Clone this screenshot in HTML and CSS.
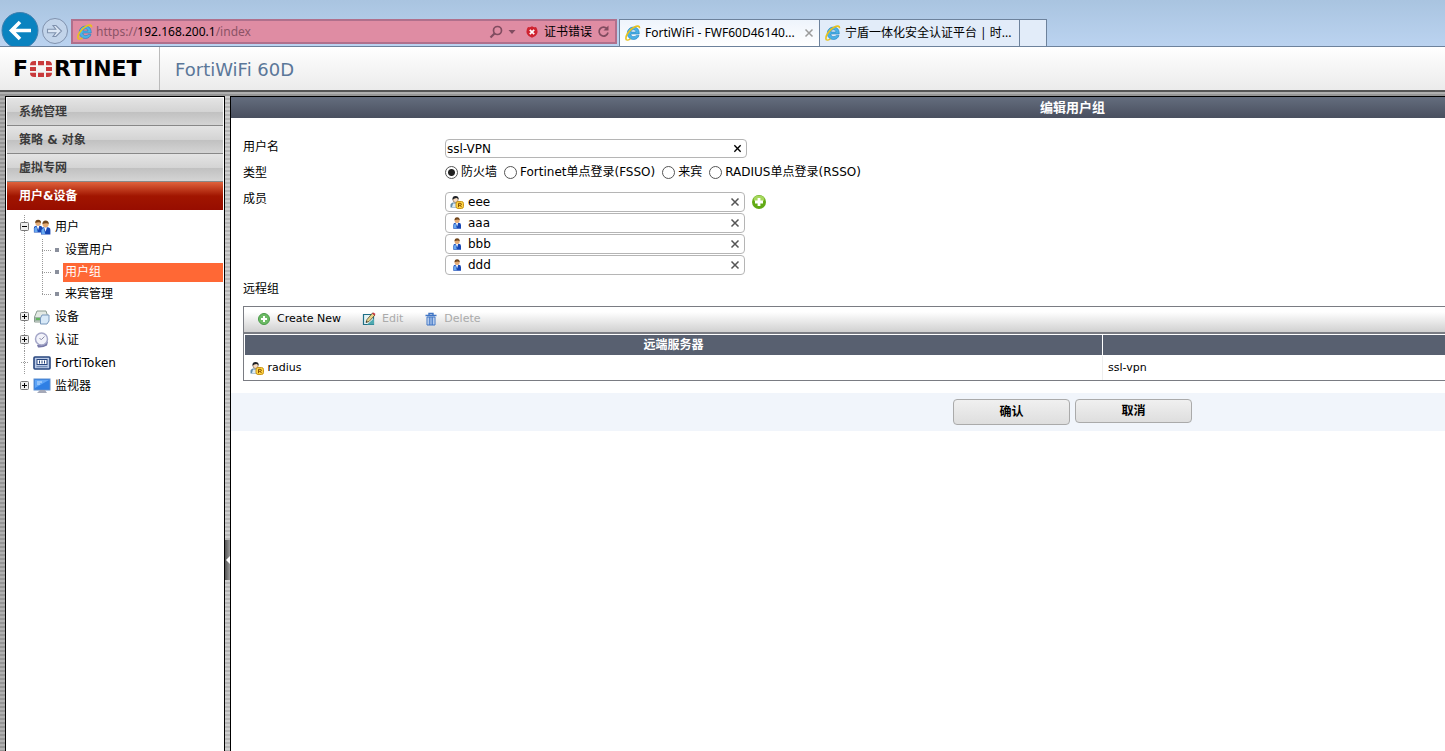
FILE: index.html
```html
<!DOCTYPE html>
<html lang="zh-CN">
<head>
  <meta charset="UTF-8" />
  <meta name="viewport" content="width=device-width, initial-scale=1" />
  <title>FortiWiFi - FWF60D46140</title>
  <link rel="stylesheet" href="styles.css">
</head>
<body>
  <!-- shared icons -->
  <svg class="defs" width="0" height="0" aria-hidden="true">
    <symbol id="ie" viewBox="0 0 16 16">
      <path d="M14.200 9H5.800c.1 1.700 1.300 2.600 2.900 2.600 1.200 0 2-.4 2.500-1.200H14c-.8 2.500-2.700 4.100-5.500 4.100-3.700 0-6.200-2.500-6.200-6.200 0-3.600 2.600-6.200 6.200-6.200 3.600 0 6 2.600 5.700 6.900zM5.900 7h5.100c-.2-1.400-1.200-2.200-2.500-2.200S6.200 5.600 5.900 7z" fill="#4bb1e6" stroke="#1f7fc0" stroke-width=".6"/>
      <path d="M1.500 15C-.6 12.300 3.800 4.800 9.500 2c2.800-1.400 5.200-1.300 5 1.200" fill="none" stroke="#e8c21c" stroke-width="1.600"/>
      <path d="M1.500 15c1.200.4 2.700-.3 4-1.300" fill="none" stroke="#e8c21c" stroke-width="1.400"/>
    </symbol>
    <symbol id="person" viewBox="0 0 9 12">
      <path d="M.8 11.800V8q0-2.300 2.200-2.300h3Q8.500 5.700 8.500 8v3.800z" fill="#1746b4"/>
      <path d="M1.200 11.300V8l1.800-2 1.300 5.300z" fill="#69a9f0"/>
      <path d="M3.300 5.800h2.400L4.600 9.500z" fill="#fff"/>
      <circle cx="4.600" cy="3.400" r="2.500" fill="#e6ac74"/>
      <path d="M2 3.200Q2 .3 4.600.3t2.600 2.900Q5.500 1.900 2 3.200z" fill="#70451c"/>
    </symbol>
    <symbol id="radius-user" viewBox="0 0 14 14">
      <path d="M.5 12.500V10q0-2 3-2.500h3q3 .5 3 2.500v2.500z" fill="#5f8aa8"/>
      <path d="M2 12l1-3.500h3L6.500 12z" fill="#dbeaf2"/>
      <circle cx="5.500" cy="4.800" r="2.600" fill="#f7dcc0" stroke="#5b4936" stroke-width=".5"/>
      <path d="M2.500 4.800Q2 1 5.500 1t3.200 3.800Q8 3 6.500 3T2.500 4.800z" fill="#1f2126"/>
      <rect x="6" y="6.500" width="7.500" height="7" rx="2" fill="#ffd545" stroke="#c58c0a" stroke-width=".9"/>
      <path d="M8.500 12.200V8.300h1.700q1.200 0 1.200 1t-1.200 1H8.600m1.500 0l1.500 1.900" fill="none" stroke="#8b5200" stroke-width="1"/>
    </symbol>
    <symbol id="cross" viewBox="0 0 10 10">
      <path d="M1.500 1.500l7 7m0-7l-7 7" fill="none" stroke="currentColor" stroke-width="1.500"/>
    </symbol>
  </svg>

  <div class="browser">
    <button class="back" aria-label="后退">
      <svg width="38" height="34" viewBox="0 0 38 34"><circle cx="19" cy="18.500" r="18" fill="#0a83c0" stroke="#3f7fae"/><path d="M30 18.500H12M19 10l-8.500 8.500L19 27" fill="none" stroke="#fff" stroke-width="3.600"/></svg>
    </button>
    <button class="forward" aria-label="前进">
      <svg width="18" height="14" viewBox="0 0 18 14"><path d="M1.500 5.200h8.300L7 1.500h3L15.500 7 10 12.500H7l2.800-3.700H1.500z" fill="#dce7f5" stroke="#8092ae" stroke-width="1.100"/></svg>
    </button>
    <div class="address">
      <svg width="16" height="16"><use href="#ie"/></svg>
      <span class="url">https://<b>192.168.200.1</b>/index</span>
      <svg class="search" width="14" height="14" viewBox="0 0 14 14"><circle cx="8.500" cy="5.500" r="4" fill="none" stroke="#814c60" stroke-width="1.700"/><path d="M5.500 8.500L1.500 12.500" stroke="#814c60" stroke-width="2.200"/></svg>
      <svg class="caret" width="8" height="4" viewBox="0 0 8 4"><path d="M.5 0h7L4 4z" fill="#814c60"/></svg>
      <svg class="bad" width="12" height="12" viewBox="0 0 12 12"><path d="M2 1Q4 1.500 6 .3q2 1.200 4 .7 2.500 3.500 1 7-1.500 3-5 3.800Q2.500 11 1 8-.5 4.500 2 1z" fill="#cf2330"/><path d="M3.800 3.800l4.400 4.400m0-4.400L3.800 8.200" stroke="#fff" stroke-width="1.700"/></svg>
      <span class="cert">证书错误</span>
      <svg width="13" height="13" viewBox="0 0 13 13"><path d="M10.300 4A4.500 4.500 0 1 0 11 7.500" fill="none" stroke="#814c60" stroke-width="1.700"/><path d="M11.500.5v5h-5z" fill="#814c60"/></svg>
    </div>
    <div class="tab active">
      <svg width="16" height="16"><use href="#ie"/></svg>
      <span>FortiWiFi - FWF60D46140...</span>
      <svg class="close" width="10" height="10"><use href="#cross"/></svg>
    </div>
    <div class="tab">
      <svg width="16" height="16"><use href="#ie"/></svg>
      <span>宁盾一体化安全认证平台 | 时...</span>
    </div>
    <div class="tab new"></div>
  </div>

  <header class="header">
    <div class="logo">
      <span>F</span>
      <svg width="22" height="16" viewBox="0 0 22 16" aria-label="O">
        <g fill="#c93a3c">
          <path d="M0 4.300Q0 0 4.300 0H6v4.300zM8 0h6v4.300H8zM16 0h1.700Q22 0 22 4.300h-6z"/>
          <path d="M0 6h6v4H0zM16 6h6v4h-6z"/>
          <path d="M0 11.700h6V16H4.300Q0 16 0 11.700zM8 11.700h6V16H8zM16 11.700h6q0 4.300-4.300 4.300H16z"/>
        </g>
      </svg>
      <span>RTINET</span>
    </div>
    <h1>FortiWiFi 60D</h1>
  </header>

  <div class="workspace">
    <nav class="sidebar">
      <a class="section" href="#">系统管理</a>
      <a class="section" href="#">策略 &amp; 对象</a>
      <a class="section" href="#">虚拟专网</a>
      <a class="section current" href="#">用户&amp;设备</a>
      <ul class="tree">
        <li>
          <a class="node" href="#">
            <svg class="toggle" width="9" height="9" viewBox="0 0 9 9"><rect x=".5" y=".5" width="8" height="8" rx="1" fill="#eee" stroke="#777"/><path d="M2 4.500h5" stroke="#000"/></svg>
            <svg width="18" height="16" viewBox="0 0 18 16"><use href="#person" x="0" y="0" width="10" height="14"/><use href="#person" x="7" y="1" width="11" height="15"/></svg>
            用户
          </a>
          <ul class="leaves">
            <li><a href="#">设置用户</a></li>
            <li><a class="selected" href="#">用户组</a></li>
            <li><a href="#">来宾管理</a></li>
          </ul>
        </li>
        <li>
          <a class="node" href="#">
            <svg class="toggle" width="9" height="9" viewBox="0 0 9 9"><rect x=".5" y=".5" width="8" height="8" rx="1" fill="#eee" stroke="#777"/><path d="M2 4.500h5M4.500 2v5" stroke="#000"/></svg>
            <svg width="18" height="16" viewBox="0 0 18 16"><path d="M4 2h9l2 6v5H1.500V8z" fill="#e3e9e4" stroke="#8b9c92"/><path d="M2 8h12v4H2z" fill="#9eb4a5"/><path d="M3 10h4" stroke="#4eb44a" stroke-width="1.500"/><path d="M9 6h7v6l-2 3H7.500V9z" fill="#d8e9f8" stroke="#7898bc"/></svg>
            设备
          </a>
        </li>
        <li>
          <a class="node" href="#">
            <svg class="toggle" width="9" height="9" viewBox="0 0 9 9"><rect x=".5" y=".5" width="8" height="8" rx="1" fill="#eee" stroke="#777"/><path d="M2 4.500h5M4.500 2v5" stroke="#000"/></svg>
            <svg width="18" height="16" viewBox="0 0 18 16"><path d="M4 13l1 2.500q5 .5 9-2l1-4z" fill="#7779a8"/><circle cx="8.500" cy="7" r="6" fill="#f2f3fa" stroke="#a5a7c8" stroke-width="1.500"/><path d="M8.500 7.500l3-3M8.500 7.500l-2-1" stroke="#8a8ca8"/></svg>
            认证
          </a>
        </li>
        <li>
          <a class="node" href="#">
            <span class="toggle none"></span>
            <svg width="18" height="16" viewBox="0 0 18 16"><rect x="1" y="2" width="16" height="12" rx="1" fill="#b9c9e6" stroke="#29477f" stroke-width="1.600"/><rect x="4" y="4.500" width="10" height="5" fill="#fff" stroke="#29477f"/><path d="M6.500 5.500v3m2.500-3v3M11.500 5.500v3" stroke="#29477f"/><path d="M3.500 11.700h11" stroke="#637fac"/></svg>
            FortiToken
          </a>
        </li>
        <li>
          <a class="node" href="#">
            <svg class="toggle" width="9" height="9" viewBox="0 0 9 9"><rect x=".5" y=".5" width="8" height="8" rx="1" fill="#eee" stroke="#777"/><path d="M2 4.500h5M4.500 2v5" stroke="#000"/></svg>
            <svg width="18" height="16" viewBox="0 0 18 16"><rect x="1" y="1" width="16" height="11" fill="#2f7fe4" stroke="#5f8fd0"/><path d="M2 2h14L2 10z" fill="#5da4f7"/><path d="M4 4h5M4 6h3" stroke="#c9e3ff"/><path d="M7 12h5l2 3H4z" fill="#a5a9b8"/></svg>
            监视器
          </a>
        </li>
      </ul>
    </nav>

    <div class="splitter"><button aria-label="折叠菜单"></button></div>

    <main class="panel">
      <h2>编辑用户组</h2>
      <form>
        <div class="fields">
          <label for="name">用户名</label>
          <div class="name-box">
            <input type="text" id="name" value="ssl-VPN">
            <button type="button" aria-label="清除"><svg width="9" height="9"><use href="#cross" width="9" height="9"/></svg></button>
          </div>

          <span>类型</span>
          <div class="types">
            <input type="radio" name="type" id="firewall" checked><label for="firewall">防火墙</label>
            <input type="radio" name="type" id="fsso"><label for="fsso">Fortinet单点登录(FSSO)</label>
            <input type="radio" name="type" id="guest"><label for="guest">来宾</label>
            <input type="radio" name="type" id="rsso"><label for="rsso">RADIUS单点登录(RSSO)</label>
          </div>

          <span>成员</span>
          <div class="members">
            <ul>
              <li><svg width="14" height="14"><use href="#radius-user"/></svg><span>eee</span><button type="button" aria-label="移除"><svg width="10" height="10"><use href="#cross"/></svg></button></li>
              <li><svg width="14" height="12"><use href="#person" width="14" height="12"/></svg><span>aaa</span><button type="button" aria-label="移除"><svg width="10" height="10"><use href="#cross"/></svg></button></li>
              <li><svg width="14" height="12"><use href="#person" width="14" height="12"/></svg><span>bbb</span><button type="button" aria-label="移除"><svg width="10" height="10"><use href="#cross"/></svg></button></li>
              <li><svg width="14" height="12"><use href="#person" width="14" height="12"/></svg><span>ddd</span><button type="button" aria-label="移除"><svg width="10" height="10"><use href="#cross"/></svg></button></li>
            </ul>
            <button class="add" type="button" aria-label="添加">
              <svg width="16" height="16" viewBox="0 0 16 16"><circle cx="8" cy="8" r="7" fill="#62aa15"/><ellipse cx="8" cy="5" rx="5.500" ry="3.500" fill="#a5d75c"/><path d="M8 4v8M4 8h8" stroke="#fff" stroke-width="2.800"/></svg>
            </button>
          </div>

          <span>远程组</span>
        </div>

        <div class="grid">
          <div class="toolbar">
            <button type="button">
              <svg width="14" height="14" viewBox="0 0 14 14"><circle cx="7" cy="7" r="5.500" fill="#6dbb66" stroke="#4a9a48"/><path d="M7 4v6M4 7h6" stroke="#fff" stroke-width="2"/></svg>
              Create New
            </button>
            <button type="button" disabled>
              <svg width="14" height="14" viewBox="0 0 14 14"><path d="M1.500 2.500h10v10h-10z" fill="#e4f3f5" stroke="#1f6f86" stroke-width="1.200"/><path d="M5 12.500l7-6v6z" fill="#4fa9b0"/><path d="M4 10.500l1-3L10.500 1l2.500 2-6 6.500z" fill="#e9d58a" stroke="#4d4932" stroke-width=".8"/><path d="M10 1.500l1.500-1L13.500 2 12.500 3.500z" fill="#c83742"/><path d="M4 10.500l.5-1.500 1 .8z" fill="#222"/></svg>
              Edit
            </button>
            <button type="button" disabled>
              <svg width="14" height="14" viewBox="0 0 14 14"><path d="M1.500 3.500h11M5 3V1.500h4V3" fill="none" stroke="#3f74c4" stroke-width="1.400"/><path d="M3 5h8v8H3z" fill="#d3e2f7" stroke="#3f74c4"/><path d="M5.300 5v8M7 5v8M8.700 5v8" stroke="#3f74c4"/></svg>
              Delete
            </button>
          </div>
          <table>
            <colgroup><col class="server"><col></colgroup>
            <thead>
              <tr><th>远端服务器</th><th></th></tr>
            </thead>
            <tbody>
              <tr>
                <td><svg width="14" height="14"><use href="#radius-user"/></svg>radius</td>
                <td>ssl-vpn</td>
              </tr>
            </tbody>
          </table>
        </div>

        <div class="actions">
          <button type="submit" class="ok">确认</button>
          <button type="button">取消</button>
        </div>
      </form>
    </main>
  </div>
</body>
</html>
```
FILE: styles.css
```css
* {
  box-sizing: border-box;
}

html, body {
  height: 100%;
  margin: 0;
}

body {
  display: flex;
  flex-direction: column;
  overflow: hidden;
  background: #fff;
  font-family: "DejaVu Sans", "Noto Sans CJK SC", sans-serif;
  font-size: 12px;
  line-height: 16px;
  color: #000;
}

svg {
  display: block;
  flex: none;
}

ul {
  margin: 0;
  padding: 0;
  list-style: none;
}

a {
  color: inherit;
  text-decoration: none;
}

button {
  padding: 0;
  border: none;
  background: none;
  font: inherit;
  color: inherit;
}

.defs {
  position: absolute;
}

/* browser bar */
.browser {
  flex: none;
  display: flex;
  align-items: flex-end;
  height: 47px;
  border-bottom: 1px solid #6d829c;
  background: linear-gradient(#a9c4e0, #bbd3f0);
  font-family: "Noto Sans", "Noto Sans CJK SC", sans-serif;
  white-space: nowrap;
}

.back {
  margin-left: 1px;
}

.forward {
  display: flex;
  align-items: center;
  justify-content: center;
  width: 26px;
  height: 26px;
  margin: 0 3px 2px;
  border: 1px solid #8092ae;
  border-radius: 50%;
  background: #c2d4ea;
}

.address {
  display: flex;
  align-items: center;
  width: 546px;
  height: 25px;
  margin: 0 2px 2px 0;
  padding: 0 5px 0 4px;
  border: 2px solid #b0708c;
  background: #df8ca3;
}

.url {
  flex: 1;
  margin-left: 3px;
  font-size: 12px;
  color: #8c5366;
}

.url b {
  font-weight: normal;
  color: #000;
}

.caret {
  margin: 0 10px 0 5px;
}

.cert {
  margin: 0 5px 0 6px;
}

.tab {
  display: flex;
  align-items: center;
  gap: 4px;
  width: 200px;
  height: 27px;
  padding: 0 5px;
  border: 1px solid #6d829c;
  border-width: 1px 1px 0 0;
  background: #e2ecf9;
}

.tab span {
  flex: 1;
}

.tab.active {
  width: 201px;
  border-left-width: 1px;
  background: linear-gradient(#eef4fc, #fff);
}

.tab .close {
  color: #9b9b9b;
}

.tab.new {
  width: 27px;
}

/* product header */
.header {
  flex: none;
  display: flex;
  height: 45px;
  border-bottom: 2px solid #555;
  background: linear-gradient(#fff, #ebebeb);
}

.logo {
  display: flex;
  align-items: center;
  gap: 2px;
  width: 160px;
  padding-left: 13px;
  border-right: 1px solid #bbb;
  font-size: 22px;
  font-weight: bold;
}

h1 {
  margin: 0 0 0 15px;
  font-size: 18px;
  font-weight: normal;
  line-height: 45px;
  color: #5b7799;
}

.workspace {
  flex: 1;
  display: flex;
  overflow: hidden;
  min-height: 0;
  padding: 4px 0 0 5px;
  background: repeating-linear-gradient(#b0b0b0 0 2px, #959595 2px 4px);
}

/* menu */
.sidebar {
  flex: none;
  width: 220px;
  padding: 1px;
  border: 1px solid #000;
  border-bottom: none;
  background: #fff;
}

.section {
  display: block;
  height: 28px;
  padding-left: 12px;
  border-bottom: 1px solid #888;
  background: linear-gradient(#e4e4e4, #d4d4d4 50%, #c0c0c0 51%, #d4d4d4);
  font-weight: bold;
  line-height: 29px;
  color: #3b3b3b;
}

.section.current {
  border-bottom: none;
  background: linear-gradient(#e0623c, #a11500 50%, #970d00);
  color: #fff;
}

.tree {
  padding: 5px 0 0 13px;
}

.tree > li {
  background: linear-gradient(#999 50%, transparent 50%) 4px 0 / 1px 2px repeat-y;
}

.tree > li:last-child {
  background: none;
}

.node {
  display: flex;
  align-items: center;
  height: 23px;
}

.node svg {
  margin-right: 4px;
}

.node .toggle {
  width: 9px;
  height: 9px;
  margin-right: 4px;
}

.toggle.none {
  background: linear-gradient(90deg, #999 50%, transparent 50%) 5px 4px / 2px 1px repeat-x;
}

.leaves {
  padding: 1px 0 0 22px;
}

.leaves li {
  display: flex;
  align-items: center;
  height: 22px;
  background: linear-gradient(#999 50%, transparent 50%) 0 0 / 1px 2px repeat-y;
}

.leaves li:last-child {
  background-size: 1px 11px;
  background-repeat: no-repeat;
  background-image: repeating-linear-gradient(#999 0 1px, transparent 1px 2px);
}

.leaves li::before {
  content: "";
  flex: none;
  width: 17px;
  height: 4px;
  background:
    linear-gradient(#8a8f9c, #8a8f9c) 13px 0 / 4px 4px no-repeat,
    repeating-linear-gradient(90deg, #999 0 1px, transparent 1px 2px) 0 2px / 9px 1px no-repeat;
}

.leaves a {
  flex: 1;
  height: 19px;
  margin-left: 4px;
  padding-left: 2px;
  line-height: 19px;
}

.leaves a.selected {
  background: #ff6835;
  color: #fff;
}

.splitter {
  flex: none;
  display: flex;
  align-items: center;
  width: 5px;
  padding-top: 272px;
  background: repeating-linear-gradient(#cecece 0 2px, #b4b4b4 2px 4px);
}

.splitter button {
  width: 5px;
  height: 40px;
  background: linear-gradient(90deg, #555, #999);
}

.splitter button::before {
  content: "";
  display: block;
  border: 4px solid transparent;
  border-width: 4px 4px 4px 0;
  border-right-color: #fff;
}

/* group editor, wider than the window */
.panel {
  flex: 1 0 1684px;
  border: solid #000;
  border-width: 1px 0 0 1px;
  background: #fff;
}

h2 {
  margin: 0;
  background: linear-gradient(#646d7e, #494f5e);
  font-size: 13px;
  line-height: 21px;
  text-align: center;
  color: #fff;
}

.fields {
  display: grid;
  grid-template-columns: 202px 1fr;
  grid-auto-rows: minmax(26px, auto);
  padding: 15px 12px 0;
  line-height: 28px;
}

.name-box {
  display: flex;
  align-items: center;
  width: 302px;
  height: 19px;
  margin-top: 6px;
  padding: 0 4px 0 1px;
  border: 1px solid #b5b5b5;
  border-radius: 4px;
}

.name-box input {
  flex: 1;
  min-width: 0;
  padding: 0;
  border: none;
  outline: none;
  background: none;
  font: inherit;
  line-height: 16px;
}

.fields > span,
.fields > label {
  height: 26px;
}

.types {
  display: flex;
  align-items: center;
  height: 26px;
}

.types input {
  appearance: none;
  width: 13px;
  height: 13px;
  margin: 0 3px 0 0;
  border: 1px solid #555;
  border-radius: 50%;
}

.types input:checked {
  background: radial-gradient(#222 0 3px, #fff 4px);
}

.types label {
  margin-right: 7px;
}

.members {
  display: flex;
  align-items: flex-start;
  padding: 7px 0 0;
  line-height: 16px;
}

.members ul {
  display: flex;
  flex-direction: column;
  gap: 1px;
  width: 300px;
}

.members li {
  display: flex;
  align-items: center;
  height: 20px;
  padding: 0 4px;
  border: 1px solid #b5b5b5;
  border-radius: 4px;
}

.members li span {
  flex: 1;
  margin-left: 4px;
}

.members li button {
  color: #555;
}

.add {
  margin: 2px 0 0 6px;
}

.grid {
  margin: 5px 12px 0;
  border: 1px solid #7a7c83;
  font-size: 11px;
}

.toolbar {
  display: flex;
  gap: 21px;
  padding: 4px 13px 5px;
  border-bottom: 2px solid #7a7c83;
  background: linear-gradient(#fff 20%, #d0d0d0);
}

.toolbar button {
  display: flex;
  align-items: center;
  gap: 6px;
}

.toolbar button:disabled {
  color: #aaa;
}

table {
  width: 100%;
  border-collapse: collapse;
  table-layout: fixed;
}

.server {
  width: 858px;
}

th {
  height: 21px;
  padding: 0;
  border: 1px solid #fff;
  background: #586070;
  font-size: 12px;
  color: #fff;
}

td {
  height: 24px;
  padding: 0 5px;
  border-right: 1px solid #eee;
}

td svg {
  display: inline-block;
  margin-right: 4px;
  vertical-align: middle;
}

.actions {
  display: flex;
  align-items: flex-start;
  justify-content: center;
  gap: 5px;
  height: 38px;
  margin-top: 12px;
  padding-top: 6px;
  background: #f1f5fb;
}

.actions button {
  width: 117px;
  height: 24px;
  border: 1px solid #aaa;
  border-radius: 4px;
  background: linear-gradient(#f0f0f0, #dedede);
  font-weight: bold;
}

.actions .ok {
  height: 26px;
}
```
